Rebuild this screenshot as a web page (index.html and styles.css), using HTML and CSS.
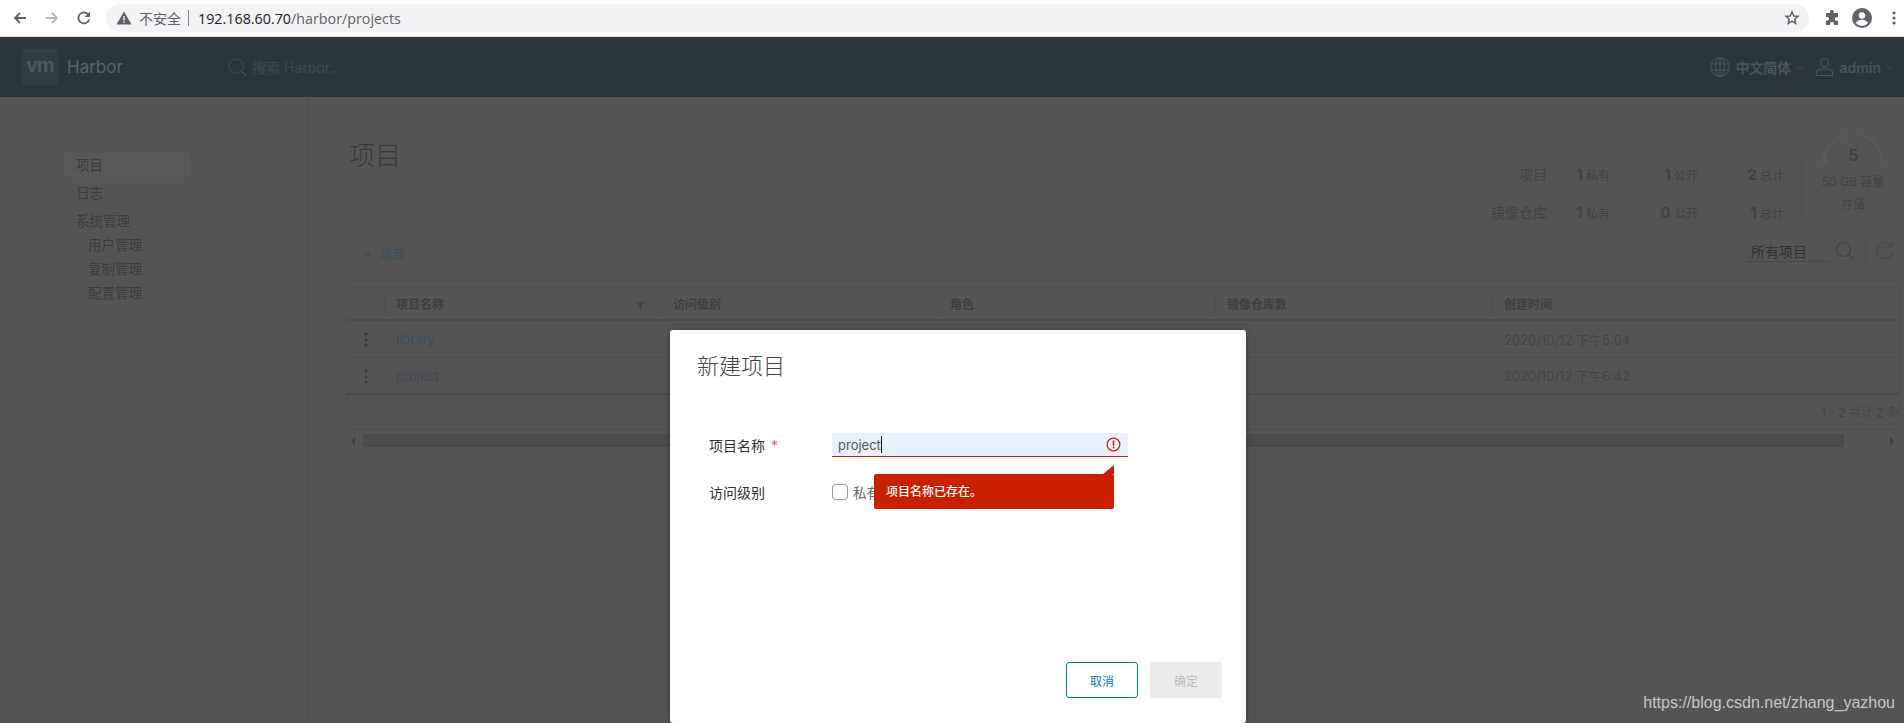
FILE: index.html
```html
<!DOCTYPE html>
<html lang="en">
<head>
  <meta charset="UTF-8" />
  <title>Harbor</title>
  <link rel="stylesheet" href="styles.css">
</head>
<body>

<!-- Browser toolbar -->
<div class="browser-bar">
  <svg class="nav-icon" viewBox="0 0 16 16"><path d="M14 8H3M8 3L3 8l5 5" fill="none" stroke="#5f6368" stroke-width="1.8"/></svg>
  <svg class="nav-icon" viewBox="0 0 16 16"><path d="M2 8h11M8 3l5 5-5 5" fill="none" stroke="#b4b6b9" stroke-width="1.8"/></svg>
  <svg class="nav-icon" viewBox="0 0 16 16"><path d="M13.2 9.5A5.5 5.5 0 1 1 12 4.2" fill="none" stroke="#5f6368" stroke-width="1.8"/><path d="M14 1.5V7H8.500z" fill="#5f6368"/></svg>
  <div class="url-pill">
    <svg class="warn-icon" viewBox="0 0 16 16"><path d="M8 1.500L15.500 14.500H.5z" fill="#5f6368"/><path d="M7.300 6h1.400v4.500H7.300zM7.300 11.500h1.400V13H7.300z" fill="#f1f3f4"/></svg>
    <span class="url-warn">不安全</span>
    <span class="url-sep"></span>
    <span class="url-host">192.168.60.70</span><span class="url-path">/harbor/projects</span>
    <svg class="star-icon" viewBox="0 0 16 16"><path d="M8 2l1.800 4 4.200.4-3.200 2.800 1 4.300L8 11.200 4.200 13.500l1-4.300L2 6.400 6.200 6z" fill="none" stroke="#5f6368" stroke-width="1.500"/></svg>
  </div>
  <svg class="ext-icon" viewBox="0 0 16 16"><path d="M6 1.500a1.800 1.800 0 0 1 3.600 0V3H14v4.200h-1.500a1.800 1.800 0 0 0 0 3.600H14V15H9.800v-1.400a1.800 1.800 0 0 0-3.600 0V15H2v-4.400h1.300a1.800 1.800 0 0 0 0-3.600H2V3h4z" fill="#5f6368"/></svg>
  <svg class="avatar-icon" viewBox="0 0 20 20"><circle cx="10" cy="10" r="10" fill="#5f6368"/><circle cx="10" cy="7.500" r="3.200" fill="#fff"/><path d="M3.800 15c1.500-2.500 4-3.300 6.200-3.300s4.700.8 6.200 3.300a8 8 0 0 1-12.400 0z" fill="#fff"/></svg>
  <svg class="dots-icon" viewBox="0 0 4 16"><circle cx="2" cy="3" r="1.600" fill="#5f6368"/><circle cx="2" cy="8" r="1.600" fill="#5f6368"/><circle cx="2" cy="13" r="1.600" fill="#5f6368"/></svg>
</div>

<!-- App header -->
<div class="app-header">
  <div class="brand">
    <span class="brand-logo">vm</span>
    <span class="brand-name">Harbor</span>
  </div>
  <div class="global-search">
    <svg class="search-icon" viewBox="0 0 20 20"><circle cx="8.500" cy="8.500" r="7.500" fill="none" stroke="#465055" stroke-width="1"/><path d="M14 14l5 5" stroke="#465055" stroke-width="1.300"/></svg>
    <span>搜索 Harbor...</span>
  </div>
  <div class="header-right">
    <svg class="globe-icon" viewBox="0 0 20 20" fill="none" stroke="#4c565b"><circle cx="10" cy="10" r="9.300"/><ellipse cx="10" cy="10" rx="4.500" ry="9.300"/><path d="M10 .7v18.600M1 7h18M1 13h18"/></svg>
    <span class="header-link">中文简体</span>
    <svg class="header-caret" viewBox="0 0 10 6"><path d="M1 1l4 4 4-4" fill="none" stroke="#4c565b"/></svg>
    <svg class="user-icon" viewBox="0 0 20 20" fill="none" stroke="#4c565b" stroke-width="1.100"><circle cx="10" cy="5.500" r="4.200"/><path d="M1.500 19v-3.500c0-2 3.500-3.500 8.500-3.500s8.500 1.500 8.500 3.500V19z"/></svg>
    <span class="header-link">admin</span>
    <svg class="header-caret" viewBox="0 0 10 6"><path d="M1 1l4 4 4-4" fill="none" stroke="#4c565b"/></svg>
  </div>
</div>

<div class="layout">
  <!-- Side navigation -->
  <div class="sidebar">
    <div class="nav-item active">项目</div>
    <div class="nav-item">日志</div>
    <div class="nav-item nav-group">
      <svg class="nav-caret" viewBox="0 0 10 6"><path d="M1 1l4 4 4-4" fill="none" stroke="#484848"/></svg>
      系统管理
    </div>
    <div class="nav-sub">用户管理</div>
    <div class="nav-sub">复制管理</div>
    <div class="nav-sub">配置管理</div>
  </div>

  <div class="main">
    <div class="page-head">
      <h1>项目</h1>
      <div class="summary">
        <div class="stats">
          <div class="stat-label">项目</div>
          <div class="stat"><b>1</b> 私有</div>
          <div class="stat"><b>1</b> 公开</div>
          <div class="stat"><b>2</b> 总计</div>
          <div class="stat-label">镜像仓库</div>
          <div class="stat"><b>1</b> 私有</div>
          <div class="stat"><b>0</b> 公开</div>
          <div class="stat"><b>1</b> 总计</div>
        </div>
        <div class="quota">
          <svg class="quota-arc" viewBox="0 0 62 28"><path d="M2 28A29 29 0 0 1 60 28" fill="none" stroke="#595959" stroke-width="2.500"/><path d="M2.300 28A29 29 0 0 1 3.500 20" fill="none" stroke="#566345" stroke-width="4"/></svg>
          <div class="quota-num">5</div>
          <div class="quota-text">50 GB 容量</div>
          <div class="quota-text quota-title">存储</div>
        </div>
      </div>
    </div>

    <div class="toolbar">
      <div class="add-btn"><span class="plus">+</span> 项目</div>
      <div class="tools">
        <div class="filter-select">所有项目
          <svg viewBox="0 0 10 6"><path d="M1 1l4 4 4-4" fill="none" stroke="#484848"/></svg>
        </div>
        <svg class="tool-icon" viewBox="0 0 20 20"><circle cx="8.500" cy="8.500" r="7" fill="none" stroke="#424242" stroke-width="1.200"/><path d="M13.500 13.500l5 5" stroke="#424242" stroke-width="1.300"/></svg>
        <span class="tool-sep"></span>
        <svg class="tool-icon" viewBox="0 0 20 20"><path d="M16.500 5A8 8 0 1 0 18 11" fill="none" stroke="#484848" stroke-width="1.200"/><path d="M17 1v5h-5" fill="none" stroke="#484848" stroke-width="1.200"/></svg>
      </div>
    </div>

    <!-- Project table -->
    <table class="grid">
      <colgroup>
        <col class="col-menu"><col class="col-wide"><col class="col-wide"><col class="col-wide"><col class="col-wide"><col>
      </colgroup>
      <thead>
        <tr>
          <th></th>
          <th>项目名称<svg class="filter-icon" viewBox="0 0 10 10"><path d="M0 1h10L6 5.500V10L4 9V5.500z" fill="#444"/></svg></th>
          <th>访问级别</th>
          <th>角色</th>
          <th>镜像仓库数</th>
          <th>创建时间</th>
        </tr>
      </thead>
      <tbody>
        <tr>
          <td class="row-menu">&#8942;</td>
          <td class="link">library</td>
          <td>公开</td>
          <td>项目管理员</td>
          <td>0</td>
          <td class="date">2020/10/12 下午5:04</td>
        </tr>
        <tr>
          <td class="row-menu">&#8942;</td>
          <td class="link">project</td>
          <td>私有</td>
          <td>项目管理员</td>
          <td>1</td>
          <td class="date">2020/10/12 下午6:42</td>
        </tr>
      </tbody>
    </table>
    <div class="grid-foot">1 - 2 共计 2 条</div>
    <div class="scrollbar">
      <span class="arrow-left"></span>
      <span class="thumb"></span>
      <span class="arrow-right"></span>
    </div>
  </div>
</div>

<!-- New project dialog -->
<div class="modal-layer">
  <div class="modal">
    <h2>新建项目</h2>
    <div class="form-row name-row">
      <label>项目名称 <span class="required">*</span></label>
      <div class="name-input">
        <span class="name-value">project</span><span class="caret"></span>
        <svg class="error-icon" viewBox="0 0 16 16"><circle cx="8" cy="8" r="6.800" fill="none" stroke="#c92100" stroke-width="1.300"/><path d="M7.200 3.800h1.600v5.400H7.200zM7.200 10.400h1.600V12H7.200z" fill="#c92100"/></svg>
      </div>
      <div class="error-tip">项目名称已存在。</div>
    </div>
    <div class="form-row">
      <label>访问级别</label>
      <span class="checkbox"></span>
      <span class="check-text">私有</span>
    </div>
    <div class="modal-foot">
      <button class="btn-cancel">取消</button>
      <button class="btn-ok" disabled>确定</button>
    </div>
  </div>
</div>

<div class="watermark">https://blog.csdn.net/zhang_yazhou</div>

</body>
</html>
```

FILE: styles.css
```css
html, body {
  margin: 0;
  height: 723px;
  overflow: hidden;
}

body {
  position: relative;
  background: #545454;
  color: #3c3c3c;
  font-family: Inter, 'Noto Sans CJK SC', sans-serif;
  font-size: 13px;
}

/* browser toolbar */
.browser-bar {
  display: flex;
  align-items: center;
  height: 36px;
  background: #fff;
  border-bottom: 1px solid #e4e4e4;
}

.nav-icon {
  width: 16px;
  height: 16px;
  margin-left: 12px;
  margin-right: 4px;
}

.nav-icon + .nav-icon {
  margin-left: 12px;
}

.url-pill {
  display: flex;
  align-items: center;
  width: 1703px;
  height: 28px;
  margin-left: 10px;
  box-sizing: border-box;
  padding: 0 9px 0 10px;
  background: #f1f3f4;
  border-radius: 14px;
  font-family: 'Open Sans', 'Noto Sans CJK SC', sans-serif;
  font-size: 14.300px;
}

.warn-icon {
  width: 16px;
  height: 16px;
}

.url-warn {
  margin-left: 7px;
  color: #5f6368;
  font-size: 14px;
}

.url-sep {
  width: 1px;
  height: 16px;
  margin: 0 9px 0 7px;
  background: #80868b;
}

.url-host {
  color: #202124;
}

.url-path {
  color: #5f6368;
}

.star-icon {
  width: 16px;
  height: 16px;
  margin-left: auto;
}

.ext-icon {
  width: 16px;
  height: 16px;
  margin-left: 15px;
}

.avatar-icon {
  width: 20px;
  height: 20px;
  margin-left: 12px;
}

.dots-icon {
  width: 4px;
  height: 16px;
  margin-left: 20px;
}

/* app header */
.app-header {
  display: flex;
  align-items: center;
  height: 60px;
  background: #2b363c;
  color: #5c666b;
}

.brand {
  display: flex;
  align-items: center;
  width: 180px;
  height: 36px;
  margin-left: 22px;
  border-right: 1px solid #303b41;
}

.brand-logo {
  width: 36px;
  height: 36px;
  background: #313d43;
  border-radius: 3px;
  color: #4f585c;
  font-family: 'Liberation Sans', sans-serif;
  font-size: 20px;
  font-weight: bold;
  line-height: 33px;
  text-align: center;
  letter-spacing: -1px;
}

.brand-name {
  margin-left: 9px;
  color: #5a6469;
  font-size: 17px;
}

.global-search {
  display: flex;
  align-items: center;
  margin-left: 25px;
  color: #3e484d;
  font-size: 14px;
}

.search-icon {
  width: 19px;
  height: 19px;
  margin-right: 5px;
}

.header-right {
  display: flex;
  align-items: center;
  margin-left: auto;
  padding-right: 10px;
}

.globe-icon {
  width: 20px;
  height: 20px;
  margin-right: 5px;
}

.header-link {
  color: #4a5459;
  font-size: 14px;
  font-weight: 600;
}

.header-caret {
  width: 8px;
  height: 5px;
  margin-left: 5px;
}

.user-icon {
  width: 19px;
  height: 20px;
  margin-left: 11px;
  margin-right: 5px;
}

/* page body */
.layout {
  display: flex;
  height: 626px;
}

.sidebar {
  width: 309px;
  box-sizing: border-box;
  padding-top: 56px;
  border-right: 1px solid #4e4e4e;
  flex-shrink: 0;
}

.nav-item {
  position: relative;
  width: 126px;
  height: 24px;
  box-sizing: border-box;
  margin: 0 0 4px 64px;
  padding-left: 12px;
  border-radius: 2px;
  font-size: 13.500px;
  line-height: 24px;
}

.nav-item.active {
  background: #585858;
}

.nav-group {
  margin-bottom: 0;
}

.nav-caret {
  position: absolute;
  left: -5px;
  top: 9px;
  width: 9px;
  height: 6px;
}

.nav-sub {
  height: 24px;
  margin-left: 88px;
  font-size: 13.500px;
  line-height: 24px;
}

.main {
  flex: 1;
  min-width: 0;
  box-sizing: border-box;
  padding: 33px 4px 0 37px;
}

.page-head {
  display: flex;
  justify-content: space-between;
  height: 100px;
}

h1 {
  margin: 8px 0 0 3px;
  font-size: 26px;
  font-weight: 300;
  line-height: 36px;
  color: #393939;
}

.summary {
  display: flex;
  align-items: flex-start;
}

.stats {
  display: grid;
  grid-template-columns: 120px 63px 88px 86px;
  grid-auto-rows: 38px;
  height: 54px;
  margin-top: 33px;
  padding-right: 17px;
  border-right: 1px solid #4b4b4b;
  font-size: 12px;
  line-height: 24px;
  color: #414141;
}

.stat-label {
  text-align: right;
  font-size: 14px;
}

.stat {
  text-align: right;
}

.stat b {
  font-size: 15px;
  color: #424242;
}

.quota {
  position: relative;
  width: 64px;
  margin: 5px 15px 0 19px;
  text-align: center;
  white-space: nowrap;
  font-size: 12px;
  color: #414141;
}

.quota-arc {
  position: absolute;
  left: 1px;
  top: 0;
  width: 62px;
  height: 28px;
}

.quota-num {
  height: 28px;
  padding-top: 9px;
  font-size: 16px;
  font-weight: bold;
  line-height: 22px;
  color: #424242;
}

.quota-text {
  line-height: 20px;
  margin-left: -5px;
  margin-right: -5px;
}

.quota-title {
  margin-top: 3px;
}

.toolbar {
  display: flex;
  justify-content: space-between;
  height: 24px;
  margin-top: 9px;
}

.add-btn {
  padding: 4px 0 0 16px;
  color: #33505f;
  font-size: 12px;
  line-height: 22px;
}

.plus {
  margin-right: 3px;
  font-size: 18px;
  font-weight: 300;
  vertical-align: -1px;
}

.tools {
  display: flex;
  align-items: center;
  padding-right: 5px;
}

.filter-select {
  display: flex;
  align-items: center;
  justify-content: space-between;
  width: 84px;
  height: 22px;
  box-sizing: border-box;
  padding: 0 6px;
  border-bottom: 1px solid #464646;
  font-size: 14px;
  color: #333;
}

.filter-select svg {
  width: 9px;
  height: 6px;
}

.tool-icon {
  width: 20px;
  height: 20px;
  margin-left: 6px;
}

.tool-sep {
  width: 1px;
  height: 24px;
  margin: 0 3px 0 10px;
  background: #4b4b4b;
}

.grid {
  width: 100%;
  margin-top: 24px;
  border-collapse: separate;
  border-spacing: 0;
  table-layout: fixed;
  border: 1px solid #4e4e4e;
  border-bottom: none;
  border-radius: 2px 2px 0 0;
}

.col-menu {
  width: 37px;
}

.col-wide {
  width: 277px;
}

.grid th {
  position: relative;
  height: 31px;
  padding: 0 12px;
  border-bottom: 2px solid #4b4b4b;
  text-align: left;
  font-size: 12px;
  font-weight: 600;
  color: #3e3e3e;
}

.grid th + th::before {
  content: '';
  position: absolute;
  left: 0;
  top: 6px;
  bottom: 6px;
  width: 1px;
  background: #4e4e4e;
}

.filter-icon {
  position: absolute;
  right: 16px;
  top: 13px;
  width: 9px;
  height: 9px;
}

.grid td {
  height: 36px;
  padding: 0 12px;
  border-bottom: 1px solid #4e4e4e;
  color: #454545;
}

.grid tbody tr:last-child td {
  border-bottom-width: 2px;
  border-bottom-color: #4b4b4b;
  height: 35px;
}

.grid .row-menu {
  padding: 0;
  text-align: center;
  font-size: 16px;
  font-weight: bold;
  color: #383838;
}

.grid .link {
  color: #3c4c57;
}

.grid .date {
  color: #454545;
}

.grid-foot {
  height: 35px;
  box-sizing: border-box;
  padding-right: 0;
  border: 1px solid #4e4e4e;
  border-top: none;
  text-align: right;
  font-size: 12px;
  line-height: 35px;
  color: #454545;
}

.scrollbar {
  display: flex;
  align-items: center;
  height: 13px;
  margin-top: 4px;
}

.thumb {
  width: 1481px;
  height: 13px;
  margin-left: 8px;
  background: #4a4a4a;
}

.arrow-left {
  width: 0;
  height: 0;
  margin-left: 5px;
  border: 4px solid transparent;
  border-left: none;
  border-right: 4px solid #3f3f3f;
}

.arrow-right {
  width: 0;
  height: 0;
  margin-left: 46px;
  border: 4px solid transparent;
  border-right: none;
  border-left: 4px solid #3f3f3f;
}

/* dialog */
.modal-layer {
  position: absolute;
  left: 670px;
  top: 330px;
}

.modal {
  position: relative;
  width: 576px;
  height: 393px;
  box-sizing: border-box;
  padding: 0 24px 0 27px;
  background: #fff;
  border-radius: 3px;
  box-shadow: 0 1px 6px rgba(0, 0, 0, 0.3);
  color: #333;
  font-size: 14px;
}

h2 {
  margin: 0;
  padding-top: 21px;
  font-size: 22px;
  font-weight: 300;
  line-height: 30px;
  color: #444;
}

.form-row {
  position: relative;
  display: flex;
  align-items: center;
  height: 24px;
  margin-left: 12px;
}

.name-row {
  margin-top: 52px;
}

.name-row + .form-row {
  margin-top: 23px;
}

label {
  width: 123px;
  flex-shrink: 0;
  font-size: 14px;
}

.required {
  margin-left: 2px;
  color: #e26a5a;
}

.name-input {
  display: flex;
  align-items: center;
  width: 296px;
  height: 24px;
  box-sizing: border-box;
  padding: 0 7px 0 6px;
  background: #e8f0fe;
  border-bottom: 1px solid #c92100;
}

.name-value {
  font-size: 13px;
  color: #565656;
}

.caret {
  width: 1px;
  height: 17px;
  background: #111;
}

.error-icon {
  width: 15px;
  height: 15px;
  margin-left: auto;
}

.error-tip {
  position: absolute;
  left: 165px;
  top: 41px;
  width: 240px;
  height: 35px;
  box-sizing: border-box;
  padding-left: 12px;
  background: #c92100;
  border-radius: 2px;
  color: #fff;
  font-size: 12px;
  font-weight: 500;
  line-height: 35px;
  z-index: 1;
}

.error-tip::before {
  content: '';
  position: absolute;
  right: 0;
  top: -9px;
  border-bottom: 9px solid #c92100;
  border-left: 11px solid transparent;
}

.checkbox {
  width: 14px;
  height: 14px;
  border: 1px solid #9a9a9a;
  border-radius: 3px;
}

.check-text {
  margin-left: 5px;
  font-size: 13.500px;
  color: #666;
}

.modal-foot {
  position: absolute;
  right: 24px;
  top: 332px;
  display: flex;
  gap: 12px;
}

.modal-foot button {
  width: 72px;
  height: 36px;
  border-radius: 3px;
  font-family: inherit;
  font-size: 12px;
}

.btn-cancel {
  background: #fff;
  border: 1px solid #0079b8;
  color: #0079b8;
}

.btn-ok {
  background: #ebebeb;
  border: none;
  color: #bcbcbc;
}

.watermark {
  position: absolute;
  right: 9px;
  top: 694px;
  font-family: 'Liberation Sans', sans-serif;
  font-size: 16px;
  color: #c4c4c4;
}
```
